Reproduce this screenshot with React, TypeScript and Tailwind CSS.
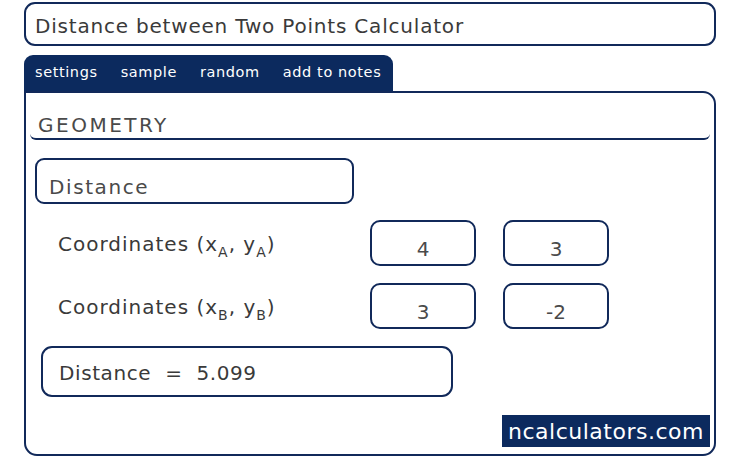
export default function App() {
  const rows = [
    { label: 'A', x: '4', y: '3' },
    { label: 'B', x: '3', y: '-2' },
  ];

  return (
    <div className="w-[735px] h-[457px] bg-white overflow-hidden text-[#3a3a3a]" style={{ fontFamily: '"DejaVu Sans", "Noto Sans", sans-serif' }}>
      <div className="ml-[24px] mt-[2px] w-[692px]">
        {/* Title */}
        <div className="h-[44px] border-2 border-[#11295a] rounded-[11px] flex items-center pl-[9px] pt-[3px] text-[20px] tracking-[0.8px]">
          Distance between Two Points Calculator
        </div>

        {/* Tabs */}
        <div className="mt-[9px] flex w-[369px] h-[36px] bg-[#0c2a5e] rounded-t-[9px] text-white text-[14.5px] items-center pl-[11px] gap-[23px] tracking-[0.6px]">
          <span>settings</span>
          <span>sample</span>
          <span>random</span>
          <span>add to notes</span>
        </div>

        {/* Panel */}
        <div className="h-[365px] border-2 border-[#11295a] rounded-b-[13px] rounded-tr-[13px] relative">
          <div className="mx-[4px] mt-[14px] h-[33px] border-b-2 border-[#11295a] rounded-b-[6px] pl-[8px] pt-[4px] text-[20px] text-[#4a4a4a] leading-[28px] tracking-[2.5px]">
            GEOMETRY
          </div>

          <div className="ml-[9px] mt-[18px] w-[319px] h-[46px] border-2 border-[#11295a] rounded-[9px] flex items-end pl-[12px] text-[20px] text-[#4a4a4a] tracking-[1.6px]">
            Distance
          </div>

          <div className="mt-[16px] flex flex-col gap-[17px]">
            {rows.map((r) => (
              <div key={r.label} className="flex items-center h-[46px]">
                <div className="ml-[32px] w-[312px] text-[20px] pt-[2px] tracking-[1px]">
                  Coordinates (x<sub className="text-[14px] align-[-2px]">{r.label}</sub>, y<sub className="text-[14px] align-[-2px]">{r.label}</sub>)
                </div>
                <div className="w-[106px] h-[46px] border-2 border-[#11295a] rounded-[10px] flex items-end justify-center text-[20px] text-[#4a4a4a]">
                  {r.x}
                </div>
                <div className="ml-[27px] w-[106px] h-[46px] border-2 border-[#11295a] rounded-[10px] flex items-end justify-center text-[20px] text-[#4a4a4a]">
                  {r.y}
                </div>
              </div>
            ))}
          </div>

          <div className="ml-[15px] mt-[17px] w-[412px] h-[51px] border-2 border-[#11295a] rounded-[11px] flex items-center pl-[16px] pt-[2px] text-[20px] tracking-[0.6px]">
            Distance&nbsp; =&nbsp; 5.099
          </div>

          <div className="flex justify-end mr-[4px] mt-[18px]">
            <div className="w-[208px] h-[32px] bg-[#0c2a5e] text-white text-[22px] flex items-center justify-center tracking-[0.5px]">
              ncalculators.com
            </div>
          </div>
        </div>
      </div>
    </div>
  );
}
